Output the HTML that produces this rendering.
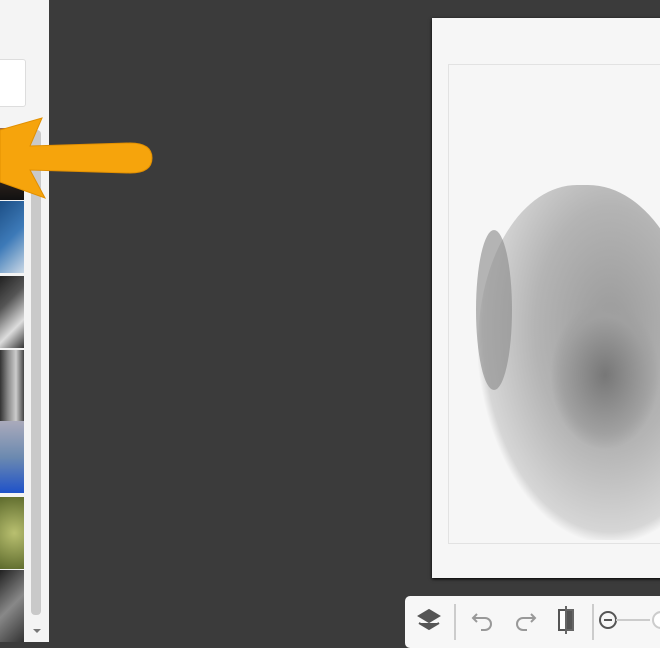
<!DOCTYPE html>
<html><head><style>
body{margin:0;width:660px;height:642px;overflow:hidden;background:#3b3b3b;position:relative;font-family:"Liberation Sans",sans-serif}
.side{position:absolute;left:0;top:0;width:49px;height:642px;background:#f4f4f4}
.search{position:absolute;left:-4px;top:59px;width:28px;height:46px;background:#fff;border:1px solid #ddd;border-radius:3px}
.th{position:absolute;left:0;width:24px;height:72px}
.sb{position:absolute;left:31px;top:130px;width:10px;height:485px;background:#c9c9c9;border-radius:4px}
.paper{position:absolute;left:432px;top:18px;width:240px;height:560px;background:#f6f6f6;box-shadow:0 1px 3px #000}
.inner{position:absolute;left:448px;top:64px;width:230px;height:478px;border:1px solid #e2e2e2}
.tb{position:absolute;left:405px;top:596px;width:270px;height:52px;background:#f7f7f7;border-radius:5px}
</style></head><body>
<div class="side"></div>
<div class="search"></div>
<div class="th" style="top:128px;background:linear-gradient(#a06b4c,#3a2a20 60%,#111)"></div>
<div class="th" style="top:201px;background:linear-gradient(135deg,#1d4f86,#3d7ab8,#cbd9e6)"></div>
<div class="th" style="top:276px;background:linear-gradient(135deg,#222,#555,#ddd 70%,#333)"></div>
<div class="th" style="top:350px;background:linear-gradient(90deg,#333,#888,#ccc,#444)"></div>
<div class="th" style="top:421px;background:linear-gradient(#aab,#6c8ab0,#1f52c9)"></div>
<div class="th" style="top:497px;background:radial-gradient(circle at 60% 50%,#b9c070,#5d6a2c)"></div>
<div class="th" style="top:570px;height:72px;background:linear-gradient(135deg,#222,#888,#333)"></div>
<div class="sb"></div>
<div style="position:absolute;left:33px;top:629px;width:0;height:0;border:4px solid transparent;border-top-color:#777"></div>
<div class="paper"></div>
<div class="inner"></div>
<div style="position:absolute;left:478px;top:185px;width:220px;height:355px;border-radius:45% 50% 10% 30%;background:radial-gradient(ellipse at 60% 40%,#9a9a9a,#b4b4b4 40%,#d6d6d6 68%,transparent 72%)"></div>
<div style="position:absolute;left:476px;top:230px;width:36px;height:160px;border-radius:50%;background:#888;opacity:.6"></div>
<div style="position:absolute;left:550px;top:300px;width:110px;height:150px;border-radius:50%;background:radial-gradient(#777,#a0a0a0 55%,transparent 70%)"></div>
<svg style="position:absolute;left:0;top:110px" width="160" height="95"><path d="M0 20 L42 8 L30 36 L130 33 Q152 33 152 48 Q152 63 130 63 L30 60 L45 88 L0 72 Z" fill="#f6a40c" stroke="#e18f00" stroke-width="1"/></svg>
<div class="tb"></div>
<svg style="position:absolute;left:405px;top:596px" width="255" height="46" fill="none" stroke="#666" stroke-width="2">
<path d="M14 20 L24 14 L34 20 L24 26Z M14 27 L24 33 L34 27" fill="#555" stroke="#555"/>
<line x1="50" y1="8" x2="50" y2="44" stroke="#ccc"/>
<path d="M72 18 L68 22 L72 26 M68 22 H80 A6 6 0 0 1 80 34 H76" stroke="#999"/>
<path d="M126 18 L130 22 L126 26 M130 22 H118 A6 6 0 0 0 118 34 H122" stroke="#999"/>
<rect x="154" y="14" width="14" height="20" fill="#fff" stroke="#555"/><rect x="161" y="14" width="7" height="20" fill="#555"/><line x1="161" y1="10" x2="161" y2="38"/>
<line x1="188" y1="8" x2="188" y2="44" stroke="#ccc"/>
<circle cx="203" cy="24" r="8" stroke="#555"/><line x1="199" y1="24" x2="207" y2="24" stroke="#555"/>
<line x1="211" y1="24" x2="245" y2="24" stroke="#ccc"/><circle cx="256" cy="24" r="8" fill="#fff" stroke="#ccc"/>
</svg>
</body></html>
